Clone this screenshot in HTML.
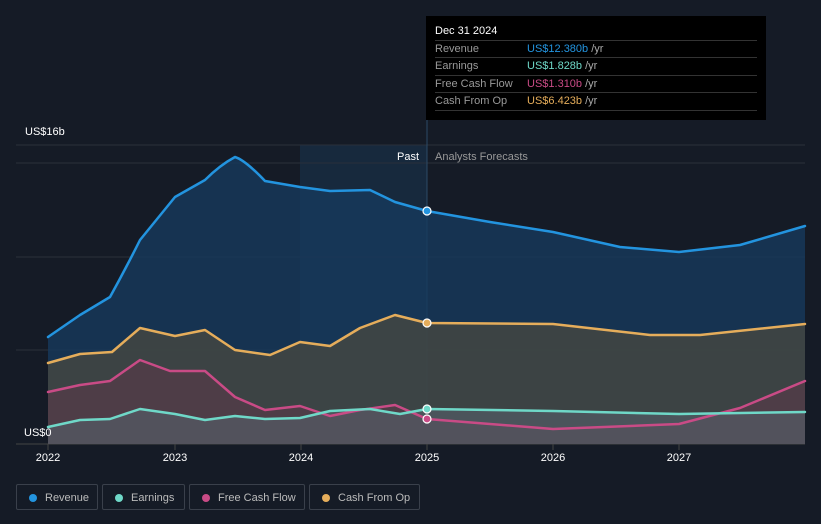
<!DOCTYPE html>
<html><head><meta charset="utf-8"><style>
body{margin:0;background:#151b26;width:821px;height:524px;overflow:hidden;font-family:"Liberation Sans",sans-serif;}
.tt{position:absolute;left:426px;top:16px;width:340px;height:104px;background:#000;}
.tt .h{position:absolute;left:9px;top:9px;color:#fff;font-size:11px;}
.row{position:absolute;left:9px;width:322px;height:17px;border-top:1px solid #333;font-size:11px;color:#999;line-height:17px;}
.row span{position:absolute;left:92px;}
.row i{font-style:normal;color:#aaa;}
.leg{position:absolute;top:484px;height:26px;border:1px solid #3a404b;border-radius:2px;color:#bbb;font-size:11px;line-height:26px;box-sizing:border-box;}
.leg b{position:absolute;left:12px;top:9px;width:8px;height:8px;border-radius:50%;}
.leg span{position:absolute;left:28px;}
</style></head><body>
<svg width="821" height="524" style="position:absolute;left:0;top:0">
<rect x="300" y="145" width="127" height="299" fill="#1a3550" opacity="0.55"/>
<g stroke="#2a303b" stroke-width="1">
<line x1="16" y1="145" x2="805" y2="145"/><line x1="16" y1="163" x2="805" y2="163"/>
<line x1="16" y1="257" x2="805" y2="257"/><line x1="16" y1="350" x2="805" y2="350"/>
<line x1="16" y1="444" x2="805" y2="444" stroke="#444"/>
</g>
<line x1="427" y1="120" x2="427" y2="444" stroke="#2c4a66" stroke-width="1"/>
<g stroke-linejoin="round" stroke-linecap="round">
<path d="M48,337 L80,315 L110,297 Q125,270 140,240 L175,197 L205,180 Q220,165 235,157 Q245,160 265,181 L300,187 L330,191 L370,190 L395,202 L427,211 L490,222 L553,232 L620,247 L679,252 L740,245 L805,226 L805,444 L48,444Z" fill="#173a5c" opacity="0.8"/>
<path d="M48,363 L80,354 L112,352 L140,328 L175,336 L205,330 L235,350 L270,355 L300,342 L330,346 L360,328 L395,315 L427,323 L553,324 L650,335 L700,335 L805,324 L805,444 L48,444Z" fill="#4a4a40" opacity="0.75"/>
<path d="M48,392 L80,385 L110,381 L140,360 L170,371 L205,371 L235,397 L265,410 L300,406 L330,416 L360,410 L395,405 L427,419 L553,429 L679,424 L740,408 L805,381 L805,444 L48,444Z" fill="#5a3a4a" opacity="0.6"/>
<path d="M48,427 L80,420 L110,419 L140,409 L175,414 L205,420 L235,416 L265,419 L300,418 L330,411 L370,409 L400,414 L427,409 L553,411 L679,414 L805,412 L805,444 L48,444Z" fill="#55606a" opacity="0.6"/>
<g fill="none" stroke-width="2.5">
<path d="M48,337 L80,315 L110,297 Q125,270 140,240 L175,197 L205,180 Q220,165 235,157 Q245,160 265,181 L300,187 L330,191 L370,190 L395,202 L427,211 L490,222 L553,232 L620,247 L679,252 L740,245 L805,226" stroke="#2394df"/>
<path d="M48,363 L80,354 L112,352 L140,328 L175,336 L205,330 L235,350 L270,355 L300,342 L330,346 L360,328 L395,315 L427,323 L553,324 L650,335 L700,335 L805,324" stroke="#e5ad5b"/>
<path d="M48,392 L80,385 L110,381 L140,360 L170,371 L205,371 L235,397 L265,410 L300,406 L330,416 L360,410 L395,405 L427,419 L553,429 L679,424 L740,408 L805,381" stroke="#c94b86"/>
<path d="M48,427 L80,420 L110,419 L140,409 L175,414 L205,420 L235,416 L265,419 L300,418 L330,411 L370,409 L400,414 L427,409 L553,411 L679,414 L805,412" stroke="#6fd8c8"/>
</g></g>
<g stroke="#fff" stroke-width="1.2">
<circle cx="427" cy="211" r="4" fill="#2394df"/><circle cx="427" cy="323" r="4" fill="#e5ad5b"/>
<circle cx="427" cy="409" r="4" fill="#6fd8c8"/><circle cx="427" cy="419" r="4" fill="#c94b86"/>
</g>
<g stroke="#444"><line x1="48" y1="444" x2="48" y2="450"/><line x1="175" y1="444" x2="175" y2="450"/><line x1="301" y1="444" x2="301" y2="450"/><line x1="427" y1="444" x2="427" y2="450"/><line x1="553" y1="444" x2="553" y2="450"/><line x1="679" y1="444" x2="679" y2="450"/></g>
<g font-size="11" fill="#fff" text-anchor="middle">
<text x="48" y="461">2022</text><text x="175" y="461">2023</text><text x="301" y="461">2024</text><text x="427" y="461">2025</text><text x="553" y="461">2026</text><text x="679" y="461">2027</text>
</g>
<text x="25" y="135" font-size="11" fill="#fff">US$16b</text>
<text x="24" y="436" font-size="11" fill="#fff">US$0</text>
<text x="419" y="160" font-size="11" fill="#fff" text-anchor="end">Past</text>
<text x="435" y="160" font-size="11" fill="#999">Analysts Forecasts</text>
</svg>
<div class="tt"><div class="h">Dec 31 2024</div>
<div class="row" style="top:24px">Revenue<span style="color:#2394df">US$12.380b <i>/yr</i></span></div>
<div class="row" style="top:41px">Earnings<span style="color:#6fd8c8">US$1.828b <i>/yr</i></span></div>
<div class="row" style="top:59px">Free Cash Flow<span style="color:#c94b86">US$1.310b <i>/yr</i></span></div>
<div class="row" style="top:76px;border-bottom:1px solid #333">Cash From Op<span style="color:#e5ad5b">US$6.423b <i>/yr</i></span></div>
</div>
<div class="leg" style="left:16px;width:82px"><b style="background:#2394df"></b><span>Revenue</span></div>
<div class="leg" style="left:102px;width:83px"><b style="background:#6fd8c8"></b><span>Earnings</span></div>
<div class="leg" style="left:189px;width:116px"><b style="background:#c94b86"></b><span>Free Cash Flow</span></div>
<div class="leg" style="left:309px;width:111px"><b style="background:#e5ad5b"></b><span>Cash From Op</span></div>
</body></html>
